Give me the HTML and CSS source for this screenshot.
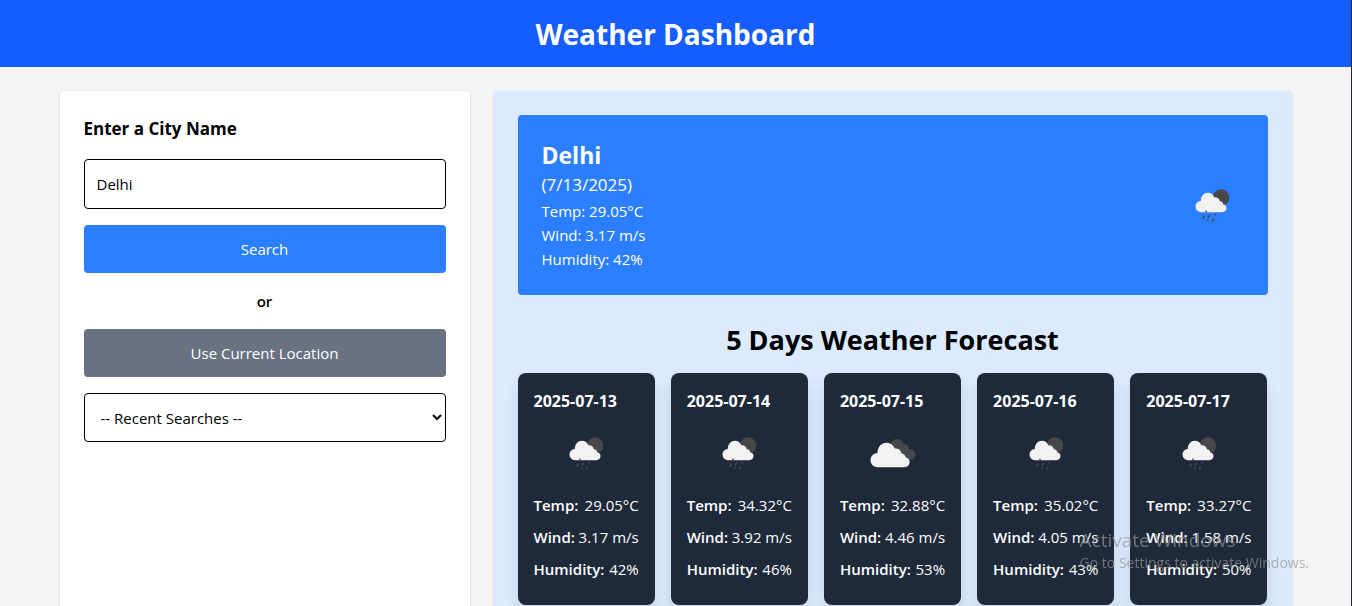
FILE: index.html
```
<!DOCTYPE html>
<html lang="en">
<head>
<meta charset="utf-8">
<meta name="viewport" content="width=device-width, initial-scale=1">
<title>Weather Dashboard</title>
<link rel="stylesheet" href="styles.css">
</head>
<body>
<svg class="sprite" aria-hidden="true">
  <symbol id="rain" viewBox="0 0 64 64">
    <circle cx="41" cy="24.5" r="8.3" fill="#48484a"/>
    <path fill="#f2f2f2" d="M21 39.2a5.6 5.6 0 0 1-5.500-5.600c0-3 2.300-5.400 5.300-5.600 0-5 3.300-8.200 7.200-8.200 3.100 0 5.400 1.800 6.300 4.600 2.900-.3 5 1.200 5.500 3.900 2.200.2 3.400 1.600 3.400 3.300 2 .1 3.300 1.400 3.300 3.500 0 2.500-1.800 4.100-4.200 4.100z"/>
    <g stroke="#48484a" stroke-width="1.700" stroke-linecap="round">
      <path d="M26 38.300v.3M24 43.200l-.9 1.800M29.400 42.300l-1 1.900M35.400 41.300l-.3.6M28 47.200l-.2.200M33.400 46.400l-.8 1.500"/>
    </g>
  </symbol>
  <symbol id="clouds" viewBox="0 0 64 64">
    <path fill="#48484a" d="M30 25c.6-4 3.400-7 7-7 3.400 0 5.700 2.200 6.300 5.200 3.400-.4 5.600 1.500 5.900 4.800 3.800.2 6.300 2.500 6.300 5.500 0 2.800-2.200 5-5 5H44z"/>
    <path fill="#f2f2f2" d="M17.500 46.300a7 7 0 0 1-7-7.100c0-3.800 2.900-6.900 6.900-7.100.1-6.200 4-10.400 9.100-10.400 4 0 6.900 2.200 8.100 5.800 3.600-.4 6.300 1.500 6.900 4.900 2.700.3 4.200 2 4.200 4.200 2.400.1 3.900 2 3.900 4.500 0 3.100-2.200 5.200-5.200 5.200z"/>
  </symbol>
</svg>
<header class="header"><h1 class="header-title">Weather Dashboard</h1></header>
<main class="layout">
  <section class="search">
    <label class="search-title" for="city">Enter a City Name</label>
    <input class="field" id="city" type="text" value="Delhi">
    <button class="button" type="button">Search</button>
    <p class="or">or</p>
    <button class="button button-muted" type="button">Use Current Location</button>
    <select class="field field-select" aria-label="Recent searches"><option>-- Recent Searches --</option></select>
  </section>
  <section class="weather">
    <article class="current">
      <div>
        <h2 class="current-city">Delhi</h2>
        <p class="current-date">(7/13/2025)</p>
        <p>Temp: 29.05°C</p>
        <p>Wind: 3.17 m/s</p>
        <p>Humidity: 42%</p>
      </div>
      <svg class="icon" role="img" aria-label="Rain"><use href="#rain"/></svg>
    </article>
    <h2 class="forecast-title">5 Days Weather Forecast</h2>
    <div class="forecast">
      <article class="day">
        <h3 class="day-date">2025-07-13</h3>
        <svg class="icon" role="img" aria-label="Rain"><use href="#rain"/></svg>
        <p class="row"><strong>Temp:</strong><span>29.05°C</span></p>
        <p class="row"><strong>Wind:</strong><span>3.17 m/s</span></p>
        <p class="row"><strong>Humidity:</strong><span>42%</span></p>
      </article>
      <article class="day">
        <h3 class="day-date">2025-07-14</h3>
        <svg class="icon" role="img" aria-label="Rain"><use href="#rain"/></svg>
        <p class="row"><strong>Temp:</strong><span>34.32°C</span></p>
        <p class="row"><strong>Wind:</strong><span>3.92 m/s</span></p>
        <p class="row"><strong>Humidity:</strong><span>46%</span></p>
      </article>
      <article class="day">
        <h3 class="day-date">2025-07-15</h3>
        <svg class="icon" role="img" aria-label="Clouds"><use href="#clouds"/></svg>
        <p class="row"><strong>Temp:</strong><span>32.88°C</span></p>
        <p class="row"><strong>Wind:</strong><span>4.46 m/s</span></p>
        <p class="row"><strong>Humidity:</strong><span>53%</span></p>
      </article>
      <article class="day">
        <h3 class="day-date">2025-07-16</h3>
        <svg class="icon" role="img" aria-label="Rain"><use href="#rain"/></svg>
        <p class="row"><strong>Temp:</strong><span>35.02°C</span></p>
        <p class="row"><strong>Wind:</strong><span>4.05 m/s</span></p>
        <p class="row"><strong>Humidity:</strong><span>43%</span></p>
      </article>
      <article class="day">
        <h3 class="day-date">2025-07-17</h3>
        <svg class="icon" role="img" aria-label="Rain"><use href="#rain"/></svg>
        <p class="row"><strong>Temp:</strong><span>33.27°C</span></p>
        <p class="row"><strong>Wind:</strong><span>1.58 m/s</span></p>
        <p class="row"><strong>Humidity:</strong><span>50%</span></p>
      </article>
    </div>
  </section>
</main>
<aside class="watermark">
  <p class="watermark-title">Activate Windows</p>
  <p>Go to Settings to activate Windows.</p>
</aside>
</body>
</html>
```
FILE: styles.css
```
* { box-sizing: border-box; margin: 0; }

body {
  min-height: 100vh;
  border-right: 1px solid #24272c;
  background: #f3f4f6;
  color: #000;
  font: 15px/24px "Segoe UI", "Open Sans", "Noto Sans", sans-serif;
}

.sprite { position: absolute; width: 0; height: 0; }

.header { padding: 17px 16px 15px; background: #155dfc; color: #fff; text-align: center; }
.header-title { font-size: 28px; line-height: 35px; font-weight: 700; }

.layout {
  display: grid;
  grid-template-columns: 410fr 798fr;
  gap: 24px;
  max-width: 1280px;
  margin: 0 auto;
  padding: 24px;
}

.search, .weather {
  padding: 24px;
  border-radius: 4px;
  box-shadow: 0 1px 3px rgb(0 0 0 / 10%), 0 1px 2px rgb(0 0 0 / 10%);
}
.search { display: flex; flex-direction: column; gap: 16px; background: #fff; }
.search-title { font-size: 17px; line-height: 28px; font-weight: 700; }

.field {
  width: 100%;
  height: 50px;
  padding: 12px;
  border: 1px solid #000;
  border-radius: 4px;
  background: #fff;
  color: #000;
  font: inherit;
}
.field-select { height: 49px; }

.button {
  padding: 12px;
  border: 0;
  border-radius: 4px;
  background: #2b7fff;
  color: #fff;
  font: inherit;
}
.button-muted { background: #6a7282; }
.or { font-weight: 600; text-align: center; }

.weather { background: #dbeafe; }
.current {
  display: flex;
  justify-content: space-between;
  align-items: center;
  padding: 24px;
  border-radius: 4px;
  background: #2b7fff;
  color: #fff;
}
.current-city { font-size: 23px; line-height: 32px; font-weight: 700; }
.current-date { font-size: 17px; line-height: 28px; }

.icon { display: block; width: 64px; height: 64px; }

.forecast-title {
  margin: 26px 0 14px;
  font-size: 27px;
  line-height: 38px;
  font-weight: 700;
  text-align: center;
}
.forecast { display: grid; grid-template-columns: repeat(5, minmax(0, 1fr)); gap: 16px; }
.day {
  display: flex;
  flex-direction: column;
  gap: 8px;
  padding: 16px 16px 24px;
  border-radius: 8px;
  background: #1e2939;
  color: #fff;
  box-shadow: 0 10px 15px rgb(0 0 0 / 10%);
}
.day .icon { align-self: center; }
.day-date { font-size: 16px; font-weight: 700; }
.row { display: flex; justify-content: space-between; white-space: nowrap; }
.row strong { font-weight: 600; }

.watermark {
  position: fixed;
  right: 43px;
  bottom: 33px;
  color: rgb(150 150 150 / 70%);
  font-size: 14px;
  line-height: 20px;
  pointer-events: none;
}
.watermark-title { font-size: 19px; line-height: 26px; }
```
